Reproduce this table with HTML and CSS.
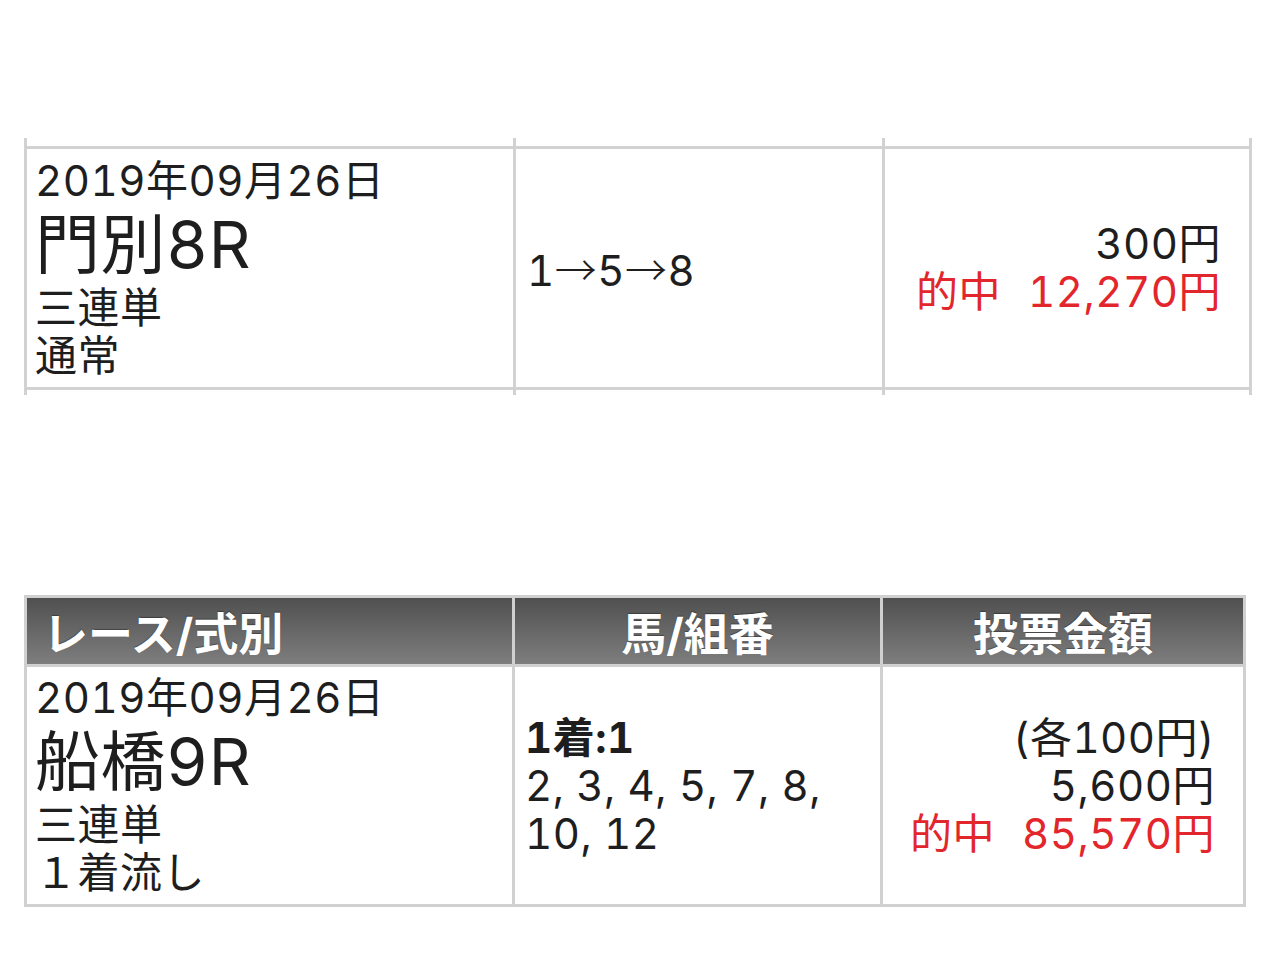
FILE: index.html
```html
<!DOCTYPE html>
<html lang="ja">
<head>
<meta charset="utf-8">
<title>投票内容</title>
<link rel="stylesheet" href="styles.css">
</head>
<body>
<div class="page">
  <div class="t1">
    <div class="col c1">
      <div class="cell left">
        <div class="date">2019年09月26日</div>
        <div class="venue">門別8R</div>
        <div class="line">三連単</div>
        <div class="line">通常</div>
      </div>
    </div>
    <div class="col c2">
      <div class="cell mid mid1">
        <div class="line">1<span class="arw">→</span>5<span class="arw">→</span>8</div>
      </div>
    </div>
    <div class="col c3">
      <div class="cell right">
        <div class="line">300円</div>
        <div class="line hit">的中<span class="sp"></span>12,270円</div>
      </div>
    </div>
  </div>

  <div class="t2">
    <div class="th th-left">レース/式別</div>
    <div class="th">馬/組番</div>
    <div class="th">投票金額</div>
    <div class="td left">
      <div class="date">2019年09月26日</div>
      <div class="venue">船橋9R</div>
      <div class="line">三連単</div>
      <div class="line">１着流し</div>
    </div>
    <div class="td mid">
      <div class="line bold">1着:1</div>
      <div class="wrap">2, 3, 4, 5, 7, 8, 10, 12</div>
    </div>
    <div class="td right">
      <div class="line">(各100円)</div>
      <div class="line">5,600円</div>
      <div class="line hit">的中<span class="sp"></span>85,570円</div>
    </div>
  </div>
</div>
</body>
</html>
```

FILE: styles.css
```css
html, body {
  margin: 0;
  padding: 0;
  background: #ffffff;
}

body {
  font-family: "Inter", "Noto Sans CJK JP", sans-serif;
  font-variant-numeric: tabular-nums;
  color: #1e1e1e;
  font-size: 42px;
}

.page {
  padding: 138px 0 0 24px;
}

/* ---------- first table (cropped row) ---------- */
.t1 {
  display: flex;
}

.col {
  display: flex;
  padding: 8px 0 5px;
  border-right: 3px solid #d2d2d2;
}

.c1 {
  width: 486px;
  border-left: 3px solid #d2d2d2;
}

.c2 {
  width: 366px;
}

.c3 {
  width: 364px;
}

.cell {
  flex: 1;
  display: flex;
  flex-direction: column;
  justify-content: center;
  border-top: 3px solid #d2d2d2;
  border-bottom: 3px solid #d2d2d2;
  height: 244px;
  box-sizing: border-box;
}

/* ---------- second table ---------- */
.t2 {
  display: grid;
  grid-template-columns: 485px 365px 360px;
  gap: 3px;
  margin-top: 200px;
  width: max-content;
  background: #d0d0d0;
  border: 3px solid #d0d0d0;
}

.th {
  height: 66px;
  display: flex;
  align-items: center;
  justify-content: center;
  background: linear-gradient(#505050, #7e7e7e);
  color: #ffffff;
  font-weight: 700;
  font-size: 45px;
  text-shadow: 0 -1px 1px rgba(0, 0, 0, 0.35);
}

.th-left {
  justify-content: flex-start;
  padding-left: 16px;
}

.td {
  background: #ffffff;
  display: flex;
  flex-direction: column;
  justify-content: center;
  height: 237px;
  box-sizing: border-box;
}

/* ---------- cell content ---------- */
.left {
  padding: 0 8px;
}

.mid {
  padding: 0 10px;
}

.mid1 {
  padding-left: 11px;
}

.right {
  padding: 0 28px 0 10px;
  text-align: right;
}

.date,
.line {
  height: 48px;
  line-height: 48px;
  letter-spacing: 0.5px;
}

.venue {
  height: 79px;
  font-size: 65px;
  line-height: 79px;
  letter-spacing: 0.5px;
}

.wrap {
  line-height: 48px;
  letter-spacing: 0.5px;
}

.arw {
  font-family: "Noto Sans CJK JP", sans-serif;
  font-weight: 300;
}

.bold {
  font-weight: 700;
}

.hit {
  color: #e2262b;
}

.sp {
  display: inline-block;
  width: 27px;
}
```
